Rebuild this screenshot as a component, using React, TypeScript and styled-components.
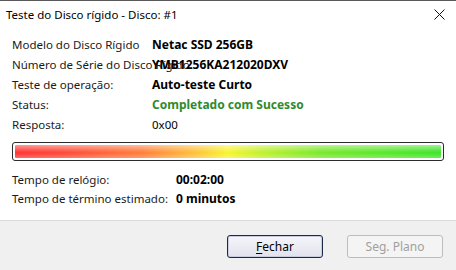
import React from "react";
import styled, { createGlobalStyle } from "styled-components";

const Global = createGlobalStyle`
  *, *::before, *::after { box-sizing: border-box; }
  html, body { margin: 0; padding: 0; background: #ffffff; }
  body { font-family: "Noto Sans", "Open Sans", sans-serif; font-size: 11.5px; color: #000; }
`;

const Window = styled.div`
  width: 456px;
  height: 270px;
  border-top: 1px solid #5a5a5a;
  display: flex;
  flex-direction: column;
  background: #fff;
  overflow: hidden;
`;

const TitleBar = styled.div`
  height: 27px;
  flex: none;
  display: flex;
  align-items: center;
  justify-content: space-between;
  padding: 0 8px 0 6px;
`;

const Title = styled.span`
  font-size: 11.5px;
  color: #000;
`;

const Close = styled.svg`
  width: 11px;
  height: 11px;
  margin-right: 3px;
`;

const Body = styled.div`
  flex: 1;
  min-height: 0;
  padding: 6px 12px 0 12px;
  display: flex;
  flex-direction: column;
`;

const InfoGrid = styled.div`
  display: grid;
  grid-template-columns: 140px 1fr;
  grid-auto-rows: 20px;
  align-items: center;
`;

const Label = styled.span`
  white-space: nowrap;
  overflow: visible;
  color: #1a1a1a;
`;

const Value = styled.span<{ $bold?: boolean; $color?: string }>`
  white-space: nowrap;
  font-size: ${(p) => (p.$bold ? "12px" : "11.5px")};
  font-weight: ${(p) => (p.$bold ? 700 : 400)};
  color: ${(p) => p.$color || "#000"};
  position: relative;
`;

const Bar = styled.div`
  margin-top: 8px;
  height: 19px;
  border: 1px solid #2b2b2b;
  border-radius: 3px;
  padding: 2px;
  background: #fdfdfd;
`;

const BarFill = styled.div`
  height: 100%;
  border-radius: 1px;
  background:
    linear-gradient(to bottom, rgba(255,255,255,0.5) 0%, rgba(255,255,255,0.1) 45%, rgba(255,255,255,0) 60%, rgba(255,255,255,0.25) 100%),
    linear-gradient(to right, #ff3434 0%, #ff4a38 12%, #ff7e3a 30%, #ffbf3a 42%, #f8f530 50%, #c0f02e 58%, #78e82c 72%, #3ee52a 100%);
`;

const TimeGrid = styled.div`
  margin-top: 9px;
  display: grid;
  grid-template-columns: 164px 1fr;
  grid-auto-rows: 19px;
  align-items: center;
`;

const Footer = styled.div`
  height: 50px;
  flex: none;
  border-top: 1px solid #dcdcdc;
  background: #f0f0f0;
  display: flex;
  justify-content: flex-end;
  align-items: flex-start;
  padding: 14px 13px 0 0;
  gap: 24px;
`;

const Button = styled.button<{ $primary?: boolean }>`
  width: 96px;
  height: 23px;
  font-family: inherit;
  font-size: 12px;
  border-radius: 3px;
  padding: 0;
  border: 1px solid ${(p) => (p.$primary ? "#1c2a4a" : "#bdbdbd")};
  background: ${(p) =>
    p.$primary
      ? "linear-gradient(to bottom, #f4f4f9 0%, #ececf4 50%, #e2e2ee 100%)"
      : "#f4f4f4"};
  color: ${(p) => (p.$primary ? "#000" : "#a0a0a0")};
  box-shadow: ${(p) => (p.$primary ? "inset 0 0 0 1px #c9cbe0" : "none")};
`;

const U = styled.span`
  text-decoration: underline;
  text-underline-offset: 2px;
`;

export default function App() {
  return (
    <>
      <Global />
      <Window>
        <TitleBar>
          <Title>Teste do Disco rígido - Disco: #1</Title>
          <Close viewBox="0 0 11 11">
            <path d="M0.5 0.5 L10.5 10.5 M10.5 0.5 L0.5 10.5" stroke="#111" strokeWidth="1" fill="none" />
          </Close>
        </TitleBar>
        <Body>
          <InfoGrid>
            <Label>Modelo do Disco Rígido</Label>
            <Value $bold>Netac SSD 256GB</Value>
            <Label>Número de Série do Disco Rígido</Label>
            <Value $bold>YMB1256KA212020DXV</Value>
            <Label>Teste de operação:</Label>
            <Value $bold>Auto-teste Curto</Value>
            <Label>Status:</Label>
            <Value $bold $color="#2e8b2e">Completado com Sucesso</Value>
            <Label>Resposta:</Label>
            <Value>0x00</Value>
          </InfoGrid>
          <Bar>
            <BarFill />
          </Bar>
          <TimeGrid>
            <Label>Tempo de relógio:</Label>
            <Value $bold>00:02:00</Value>
            <Label>Tempo de término estimado:</Label>
            <Value $bold>0 minutos</Value>
          </TimeGrid>
        </Body>
        <Footer>
          <Button $primary>
            <U>F</U>echar
          </Button>
          <Button disabled>Seg. Plano</Button>
        </Footer>
      </Window>
    </>
  );
}
